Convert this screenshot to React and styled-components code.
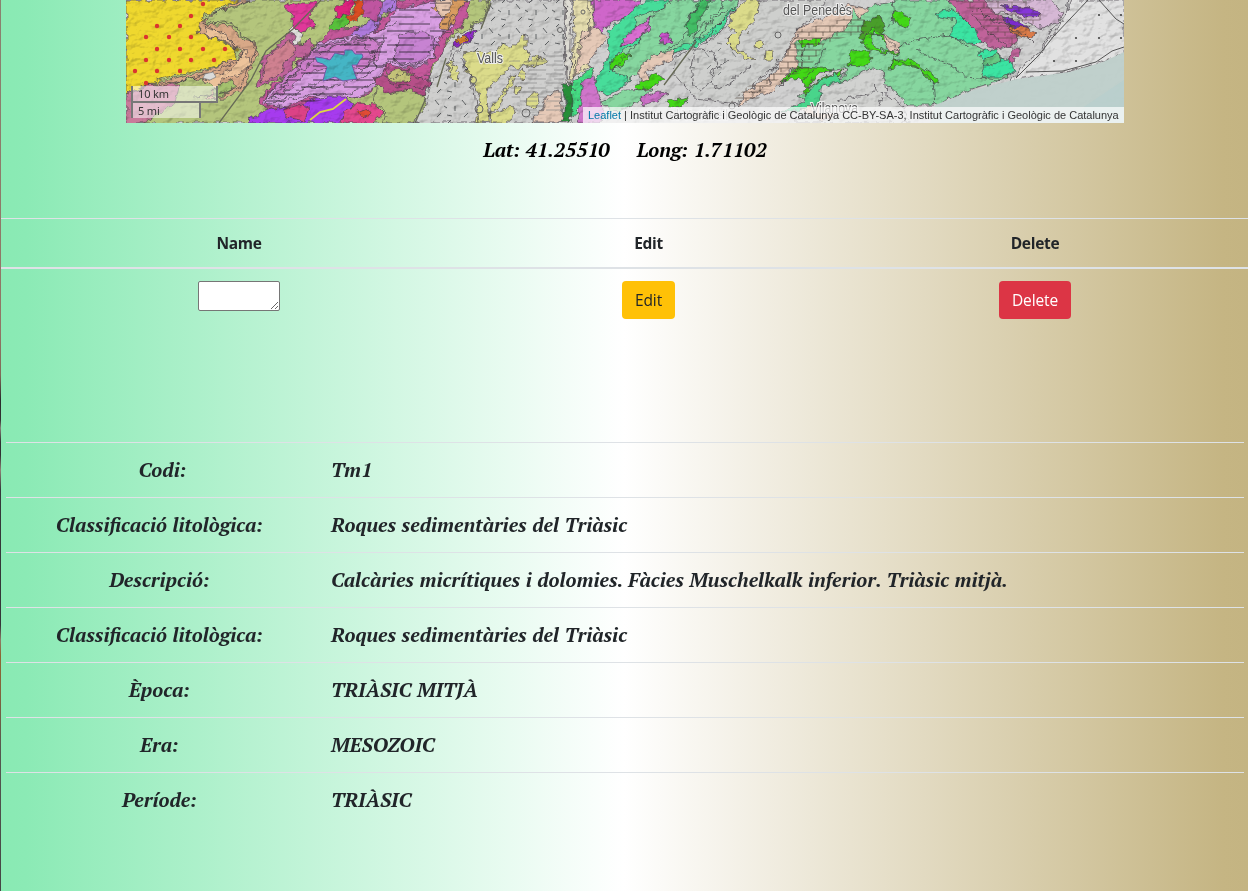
import React from 'react';
import styled, { createGlobalStyle, css } from 'styled-components';

const GlobalStyle = createGlobalStyle`
  *, *::before, *::after { box-sizing: border-box; }
  body {
    margin: 0;
    font-family: "Open Sans", "Noto Sans", sans-serif;
    font-size: 16px;
    line-height: 1.5;
    color: #212529;
  }
`;

const Page = styled.div`
  height: 891px;
  overflow: hidden;
  padding-left: 1px;
  background:
    linear-gradient(180deg, #8a8270 0, #927565 330px, #806a58 375px, #292b2c 400px, #333 420px, #858379 428px, #2f3030 442px, #303132 455px, #8e8276 470px, #35383a 490px, #343638 625px, #8d7c67 640px, #8d6734 655px, #85633c 690px, #555850 750px, #454545 891px) 0 0 / 1px 100% no-repeat,
    linear-gradient(90deg, #89eab3 0%, #8beab5 2%, #fff 50%, #c5b583 98%, #c4b482 100%);
`;

const MapFrame = styled.section`
  position: relative;
  width: 998px;
  height: 123px;
  margin-left: 125px;
  overflow: hidden;
  background: #ccc;
  font: 11px/16px "Liberation Sans", sans-serif;
`;

const MapDrawing = styled.svg`
  display: block;
`;

const ScaleControl = styled.div`
  position: absolute;
  left: 5px;
  bottom: 5px;
`;

const ScaleLine = styled.div`
  width: ${p => p.$width}px;
  height: ${p => (p.$upper ? 17 : 15)}px;
  padding: 0 5px;
  border: 2px solid #777;
  border-top: 0;
  border-bottom-width: ${p => (p.$upper ? 2 : 0)}px;
  background: rgba(255, 255, 255, 0.5);
  color: #333;
  font: 11px/15px "Noto Sans", sans-serif;
  letter-spacing: -0.15px;
`;

const Attribution = styled.div`
  position: absolute;
  right: 0;
  bottom: 0;
  width: 541px;
  height: 16px;
  padding: 0 5px;
  background: rgba(255, 255, 255, 0.7);
  color: #333;
  white-space: nowrap;
`;

const MapLink = styled.a`
  color: #0078a8;
  text-decoration: none;
`;

const serif = css`
  font-family: "PT Serif", "Liberation Serif", serif;
  font-size: 20px;
  font-weight: 700;
  font-style: italic;
  line-height: 24px;
  white-space: nowrap;
`;

const Coordinates = styled.div`
  display: flex;
  justify-content: center;
  gap: 27px;
  height: 95px;
  padding-top: 15px;
  padding-left: 1px;
  color: #000;
`;

const Coordinate = styled.span`
  ${serif}
`;

const ActionsTable = styled.div`
  height: 224px;
`;

const ActionsRow = styled.div`
  display: grid;
  grid-template-columns: 476px 343px 430px;
  justify-items: center;
  align-items: start;
  padding-top: 12px;
  ${p => p.$head && css`
    height: 51px;
    border-top: 1px solid #dee2e6;
    border-bottom: 2px solid #dee2e6;
    font-weight: 700;
    font-size: 15.5px;
    letter-spacing: -0.3px;
    line-height: 25px;
  `}
`;

const NameField = styled.textarea`
  width: 82px;
  height: 30px;
  padding: 2px;
  border: 1px solid #767676;
  border-radius: 2px;
  background: #fff;
  resize: both;
  overflow: hidden;
`;

const Button = styled.button`
  width: ${p => p.$width}px;
  height: 38px;
  padding: 0;
  border: 0;
  border-radius: 4px;
  background: ${p => (p.$danger ? '#dc3545' : '#ffc107')};
  color: ${p => (p.$danger ? '#fff' : '#212529')};
  font: 15.5px/38px "Open Sans", sans-serif;
  letter-spacing: -0.1px;
`;

const Details = styled.dl`
  margin: 0 4px 0 5px;
`;

const DetailRow = styled.div`
  display: grid;
  grid-template-columns: 313px 1fr;
  height: 55px;
  padding-top: 15px;
  border-top: 1px solid #dee2e6;
`;

const Term = styled.dt`
  ${serif}
  text-align: center;
  padding-right: ${p => (p.$first ? 0 : 6)}px;
`;

const Value = styled.dd`
  ${serif}
  margin: 0;
  padding-left: 12px;
`;

const details = [
  ['Codi:', 'Tm1'],
  ['Classificació litològica:', 'Roques sedimentàries del Triàsic'],
  ['Descripció:', 'Calcàries micrítiques i dolomies. Fàcies Muschelkalk inferior. Triàsic mitjà.'],
  ['Classificació litològica:', 'Roques sedimentàries del Triàsic'],
  ['Època:', 'TRIÀSIC MITJÀ'],
  ['Era:', 'MESOZOIC'],
  ['Període:', 'TRIÀSIC'],
];

const olive = '#b4c57c';
const purple = '#ce7fcb';
const lilac = '#d99fe3';
const plum = '#c0639a';
const green = '#86d69f';
const teal = '#3be4a2';
const lime = '#42d819';
const sand = '#e5c9b7';
const straw = '#dbdb8a';

const regions = [
  [olive, '126,0 470,0 492,0 482,22 450,38 425,82 420,123 126,123'],
  ['#c97a9a', '126,94 148,84 180,84 175,103 145,123 126,123'],
  ['#efd82f', '126,0 240,0 207,13 202,20 197,32 222,42 237,50 235,60 203,70 168,77 147,84 126,94'],
  ['#d8a887', '240,0 250,0 210,15 205,24 232,26 242,39 254,41 257,54 250,70 245,88 225,98 205,99 218,86 192,77 164,86 147,84 203,72 239,58 241,51 220,40 198,33 200,22'],
  ['#edc39b', '204,27 225,33 235,48 246,50 250,65 238,76 223,78 218,88 203,81 232,69 243,54 231,44 207,35'],
  ['#a4c16e', '219,85 233,80 235,86 221,97 212,96'],
  [plum, '287,33 294,31 301,46 308,39 314,46 305,57 296,58 288,75 257,88 263,58 275,49'],
  ['#cf8190', '275,50 292,39 296,52 286,61 280,75 261,83 266,61'],
  ['#c4589a', '334,28 370,27 388,15 400,0 470,0 468,15 458,31 447,37 443,53 431,66 425,86 405,95 398,76 382,78 367,95 339,99 322,111 305,105 288,120 248,121 269,111 258,102 270,86 290,74 298,61 320,43'],
  [lilac, '317,43 380,31 397,10 440,0 454,27 442,32 433,57 423,66 403,68 386,64 383,80 365,94 331,102 310,96 288,107 262,104 271,89 291,76 304,65'],
  [purple, '312,51 330,43 367,37 380,42 380,57 363,69 338,66 304,74 291,88 269,99 281,80'],
  ['#ad7adc', '374,0 399,0 397,10 382,14 378,29 363,37 350,36 359,27 370,20'],
  ['#c783d2', '400,34 424,31 441,45 431,51 422,61 403,63 394,60 397,45'],
  ['#e0389a', '282,6 289,3 318,3 309,16 317,26 301,32 292,26 292,15'],
  ['#dd247d', '345,0 356,0 348,15 338,18 334,10'],
  ['#dc4e24', '354,0 368,0 363,14 348,24 343,19 355,12'],
  ['#bf55a0', '363,0 382,0 378,22 363,17'],
  ['#58c13a', '335,19 346,16 350,21 340,31 329,29'],
  ['#a63bee', '245,123 263,111 281,106 296,111 310,100 326,97 347,97 352,107 339,123'],
  ['#dc4286', '282,110 302,104 310,109 304,121 287,117'],
  ['#e3468d', '343,111 358,104 375,105 384,114 373,123 342,123'],
  ['#e14b35', '357,112 367,108 371,113 363,119'],
  [olive, '377,83 394,81 401,89 420,90 426,103 420,123 382,123 386,111 374,103'],
  ['#b64f88', '374,79 407,70 430,83 423,96 409,89 387,94'],
  ['#c3c278', '386,72 398,69 413,75 406,82 390,82'],
  ['#cfcfce', '491,0 572,0 568,48 573,81 565,96 565,123 413,123 427,104 430,84 447,69 452,47 481,28'],
  ['#d99c61', '438,0 467,0 456,14 450,29 439,28 445,17 433,10'],
  ['#e7c6b0', '434,0 451,0 451,13 441,18'],
  ['#922ccb', '453,47 461,36 470,31 475,30 472,39 460,46'],
  ['#d3822d', '457,39 462,35 468,38 461,45'],
  [straw, '464,53 477,50 486,53 496,53 502,43 510,47 515,44 521,39 526,34 526,48 530,60 544,57 547,63 527,66 516,68 511,65 503,75 490,84 487,95 488,112 488,123 475,123 480,94 466,72'],
  [straw, '451,62 459,72 458,83 450,78 448,65'],
  [straw, '490,123 491,107 502,94 507,86 511,75 516,74 512,86 506,94 500,107 486,116 512,106 516,114 505,123'],
  [straw, '520,70 525,74 523,80 518,76'],
  [straw, '516,86 521,87 519,93 515,92'],
  [straw, '527,96 537,91 539,104 532,109 526,105'],
  [straw, '524,65 533,57 540,58 532,67'],
  [sand, '548,95 560,91 562,123 530,123 540,111'],
  ['#dedcd4', '565,0 572,0 570,80 575,90 566,88'],
  ['#e5ddae', '573,0 593,0 593,31 586,60 590,67 569,80 574,42'],
  ['#cf66ca', '593,0 640,0 630,17 610,23 603,32 594,28'],
  [sand, '583,30 598,27 606,39 584,66 575,76'],
  ['#46dd9a', '608,31 627,16 644,0 739,0 732,12 721,29 711,37 691,48 664,56 641,67 624,87 606,96 593,86 609,55'],
  [green, '635,18 661,8 672,0 740,0 718,25 703,37 674,49 651,62 629,80 612,70 620,51 641,42'],
  ['#d96ed1', '624,38 638,25 651,18 648,31 634,41 620,47'],
  ['#ca56cc', '659,35 669,32 672,41 662,45'],
  ['#42bd65', '684,27 701,0 710,0 692,36'],
  [lime, '609,62 622,54 630,55 624,65 609,69'],
  ['#45dc83', '573,83 591,68 594,77 587,100 575,112 569,123 565,97'],
  ['#268e39', '562,87 570,83 573,102 571,123 560,123 567,101'],
  ['#cf75ca', '583,79 594,78 598,94 603,107 600,123 577,123'],
  [green, '602,103 625,90 653,89 640,101 617,112'],
  [lime, '636,86 655,73 665,79 652,87 639,90'],
  [lime, '667,101 689,97 680,108 668,106'],
  ['#cb70c6', '640,98 658,92 668,93 657,101 642,105'],
  [sand, '637,70 654,55 674,50 673,60 645,71 650,79 642,82'],
  ['#cecfcd', '738,0 825,0 814,17 796,30 789,53 775,68 761,77 738,104 695,99 674,74 676,56 709,42 728,25'],
  [straw, '734,11 747,0 760,0 757,15 748,30 739,36 738,50 755,59 747,60 732,48 726,42 735,33 729,26'],
  [straw, '755,42 762,40 765,45 759,49 754,47'],
  [straw, '766,50 773,51 772,60 765,60'],
  [sand, '796,30 823,17 849,5 871,9 880,20 860,33 829,41 820,57 791,70 783,80 771,93 753,97 738,107 744,92 764,80 776,72 786,53'],
  [green, '797,42 820,43 848,26 854,8 861,18 872,6 900,0 964,0 979,14 972,44 1003,58 1008,78 978,87 934,105 909,105 888,86 876,80 860,84 835,98 808,102 799,96 822,84 842,78 849,68 822,72 802,72 797,64'],
  ['#489e2a', '864,22 880,15 885,30 872,44 859,38'],
  [lime, '799,40 823,38 816,45 801,46'],
  [lime, '779,83 798,67 818,68 834,69 818,73 807,88 799,76'],
  [lime, '850,52 870,50 872,61 864,67 848,65'],
  [lime, '895,9 911,17 907,28 893,22'],
  [lime, '891,60 911,60 923,68 937,77 939,82 928,80 921,69 902,64 890,70'],
  ['#44d61b', '872,27 886,38 900,53 889,54 872,50 861,44'],
  [green, '874,31 887,44 896,51 884,51 871,43'],
  ['#44d61b', '802,92 822,78 843,70 834,85 808,94'],
  [green, '808,88 825,78 842,75 832,88 810,97'],
  ['#48d58b', '781,112 803,101 817,82 835,73 842,83 828,98 810,110'],
  ['#d1d2d0', '822,86 847,81 870,67 883,71 886,94 903,106 910,123 795,123 819,104'],
  [teal, '935,14 950,8 957,13 970,17 982,28 989,38 983,43 966,42 949,36 956,20 939,17'],
  [teal, '979,52 996,48 1000,58 1012,61 1014,72 1003,77 981,77 985,67'],
  ['#68cb84', '984,58 998,54 1001,60 992,66 984,65'],
  [plum, '950,0 989,0 1004,21 1018,37 1016,45 998,49 981,43 975,30 961,16'],
  ['#d6b8d5', '984,0 1051,0 1062,13 1058,22 1042,28 1029,23 1011,14 991,12'],
  ['#8634d9', '1000,5 1028,8 1041,13 1037,17 1024,17'],
  ['#7b29cf', '1002,18 1017,20 1030,28 1023,32 1008,25'],
  ['#dc7c49', '1009,25 1024,27 1038,34 1028,38 1012,34'],
  ['#e1e1e1', '1071,0 1124,0 1124,54 1099,63 1066,73 1015,79 1007,85 1021,67 1041,51 1052,37 1064,18'],
  [plum, '1011,48 1021,48 1018,57 1010,63'],
  [sand, '883,35 899,43 901,52 888,52'],
  [sand, '801,110 818,104 828,107 835,115 821,121'],
  ['#dfdfdc', '289,28 293,26 298,31 303,34 299,46 294,43 296,38'],
];

const veins = [
  '248,1 235,7 209,14 203,23 225,22 239,27 241,36 252,40 256,51 248,65 242,86 223,93 195,97',
  '207,25 230,39 239,48 244,51 237,62 212,72 177,82 149,84 128,95',
  '320,44 297,63 295,76 268,91 265,104 284,101 311,94 335,96 359,91 378,78 393,62 410,65 427,62',
  '314,48 299,69 283,84 273,99 290,97 307,87 325,88 345,84 365,76 377,66 370,53 382,47 372,38 344,43 314,48',
  '319,54 308,66 290,77 282,91 300,90 324,80 349,78 367,67 375,55 362,43 340,44 319,54',
  '385,35 372,60 378,68 395,59 405,67 422,64 435,56 434,40 444,32 452,33 449,21 461,6',
  '398,22 377,31 376,22 388,13 397,0',
  '386,81 405,73 417,78 426,76 430,85 420,89 409,84 397,87 386,81',
  '462,58 469,76 474,90 478,123', '489,0 484,16 471,27 470,41 455,53 448,80',
  '588,0 589,35 575,45 574,80', '566,0 563,42 568,82 575,91',
  '610,72 640,41 654,12 673,2', '655,56 684,40 690,16 704,0', '693,47 696,32 719,11 724,0',
  '699,42 708,23 727,10', '704,44 718,25 734,9', '799,33 785,54 773,68 768,85 750,94',
  '805,47 801,67 792,74 779,87', '825,48 816,66 803,82', '894,60 920,68 933,82 935,105',
  '886,54 915,40 950,35 969,47', '860,33 882,35 899,51 890,66', '889,28 894,16 892,0',
  '915,49 928,57 945,62 967,77 1000,80', '971,12 982,27 996,38 1007,46', '977,7 990,20 1015,27',
  '988,20 998,19 1021,36', '1007,16 1009,28 1024,34 1035,45', '1068,0 1065,15 1052,30 1042,48',
  '695,49 691,67 694,86 701,90 711,82 716,66 713,51 701,49 695,49',
  '729,61 710,72 712,84 720,89 739,76 751,65', '873,85 883,94 878,106', '836,101 868,95 878,88',
];

const redDots = [[157,26],[180,26],[191,16],[146,37],[169,37],[191,37],[157,49],[180,49],[203,49],[225,49],[146,60],[169,60],[191,60],[214,60],[135,71],[157,71],[180,71],[146,83],[203,4]];
const blackDots = [[1099,15],[1121,15],[1076,38],[1099,38],[1121,38],[1054,61],[1076,61]];
const circles = [[473,80,3.5],[505,90,2],[526,113,4],[479,109,4],[583,12,2],[778,35,3],[560,30,2.5],[732,106,3]];

function GeologicalMap() {
  return (
    <MapDrawing width="998" height="123" viewBox="126 0 998 123" aria-hidden="true">
      <defs>
        <filter id="outline" x="-2%" y="-5%" width="104%" height="110%">
          <feTurbulence type="fractalNoise" baseFrequency=".15" numOctaves="2" seed="8" />
          <feDisplacementMap in="SourceGraphic" scale="8" xChannelSelector="R" yChannelSelector="G" />
        </filter>
        <filter id="relief" x="0" y="0" width="100%" height="100%" colorInterpolationFilters="sRGB">
          <feTurbulence type="fractalNoise" baseFrequency=".09 .13" numOctaves="4" seed="12" />
          <feColorMatrix type="matrix" values="0 0 0 0 0 0 0 0 0 0 0 0 0 0 0 1 0 0 0 0" />
          <feDiffuseLighting surfaceScale="3" diffuseConstant="1.35" lightingColor="#fff">
            <feDistantLight azimuth="225" elevation="48" />
          </feDiffuseLighting>
        </filter>
        <pattern id="strata" width="43" height="14" patternUnits="userSpaceOnUse">
          <path d="M0 3h27M12 10h31" stroke="#252029" strokeWidth=".8" />
        </pattern>
        <pattern id="bricks" width="14" height="12" patternUnits="userSpaceOnUse">
          <path d="M0 2h14M0 8h14M4 2v6M11 8v6" stroke="#51433a" strokeWidth=".65" fill="none" />
        </pattern>
        <pattern id="dashes" width="27" height="24" patternUnits="userSpaceOnUse">
          <path d="M3 4l4 5M16 3l4-4M23 10v5M9 17l-4 4M15 19l5 1M12 10l3 2" stroke="#44484a" strokeWidth=".8" />
        </pattern>
        <pattern id="fields" width="26" height="9" patternUnits="userSpaceOnUse">
          <path d="M0 2h17M8 7h18" stroke="#818181" strokeWidth=".65" />
        </pattern>
      </defs>
      <rect x="126" width="998" height="123" fill="#d0d0d0" />
      <g filter="url(#outline)" stroke="#454047" strokeWidth=".65" strokeLinejoin="round">
        {regions.map(([fill, points], i) => <polygon key={i} points={points} fill={fill} />)}
        {veins.map((points, i) => <polyline key={i} points={points} fill="none" strokeWidth=".7" />)}
      </g>
      <path d="M315 42L380 31 400 4 451 2 445 34 430 61 380 70 366 91 290 107 264 103 291 75z" fill="url(#strata)" />
      <path d="M315 57l8 1 7 2 5-7 9 2 1-5 7 0 3 4 7 0 1 3-3 3-3 5-5 0 3 9 2 5-8 1-6 1-8-4-12 4 2-8 2-6-4-3-6-2z" fill="#45b5c5" stroke="#7358a6" />
      <path d="M492 0h74v43l-26 15-14-20-27 13-35 1 19-28zM440 78l14-2 20 47h-50z" fill="url(#dashes)" />
      <path d="M509 61l53-12 5 62-33 5-22-14z" fill="url(#fields)" />
      <path d="M798 30l65-16 5 17-43 12-17 28-29 8-25 24h-24l18-17 28-14z" fill="url(#bricks)" />
      <path d="M684 63l13-15 33-11 10 24-25 18-23-9z" fill="url(#dashes)" opacity=".7" />
      <path d="M960 0l65 1 20 16-21 15-8 15-27-13z" fill="url(#bricks)" opacity=".8" />
      <rect x="126" width="998" height="123" filter="url(#relief)" opacity=".23" style={{ mixBlendMode: 'multiply' }} />
      <path d="M930 123l5-18 39-15 43-11 53-7 33-10 21-10v71z" fill="#bfcfcb" opacity=".97" />
      <path d="M1085 106l39-26v43h-55z" fill="#b0cfcf" opacity=".35" />
      <path d="M1016 78l23-23 14-18 35-37M1099 0l17 19 8 5M1026 72l37-1 33-9 16-11 12-4" fill="none" stroke="#555" strokeWidth="1" />
      <path d="M321 0l-28 29-27 22-15 29-32 43M491 3l-10 26M446 58l-9 29M426 98l-11 25M696 42l-32 43" fill="none" stroke="#666956" strokeWidth="1.3" />
      <path d="M310 120l10-8 13-3 13-10" fill="none" stroke="#ddd842" strokeWidth="1.8" />
      <path d="M205 74l8-2 3 5-6 3-7-2z" fill="#dadbda" stroke="#777" strokeWidth=".6" />
      {redDots.map(([x, y]) => <circle key={`${x}-${y}`} cx={x} cy={y} r="2.2" fill="#db352f" />)}
      {blackDots.map(([x, y]) => <circle key={`${x}-${y}`} cx={x} cy={y} r="1.1" fill="#444" />)}
      {circles.map(([x, y, r]) => <circle key={`${x}-${y}`} cx={x} cy={y} r={r} fill="none" stroke="#666" />)}
      <g fill="#555" stroke="#eee" strokeWidth="2" paintOrder="stroke" fontFamily="Liberation Sans, sans-serif" fontSize="14">
        <text x="477" y="63" textLength="26" lengthAdjust="spacingAndGlyphs">Valls</text>
        <text x="783" y="15" textLength="69" lengthAdjust="spacingAndGlyphs">del Penedès</text>
        <text x="811" y="113" textLength="47" lengthAdjust="spacingAndGlyphs">Vilanova</text>
        <text x="669" y="120" textLength="59" lengthAdjust="spacingAndGlyphs" opacity=".45">el Vendrell</text>
      </g>
    </MapDrawing>
  );
}

export default function App() {
  return (
    <>
      <GlobalStyle />
      <Page>
        <MapFrame>
          <GeologicalMap />
          <ScaleControl>
            <ScaleLine $width={87} $upper>10 km</ScaleLine>
            <ScaleLine $width={70}>5 mi</ScaleLine>
          </ScaleControl>
          <Attribution><MapLink>Leaflet</MapLink> | Institut Cartogràfic i Geològic de Catalunya CC-BY-SA-3, Institut Cartogràfic i Geològic de Catalunya</Attribution>
        </MapFrame>
        <Coordinates>
          <Coordinate>Lat: 41.25510</Coordinate>
          <Coordinate>Long: 1.71102</Coordinate>
        </Coordinates>
        <ActionsTable>
          <ActionsRow $head><span>Name</span><span>Edit</span><span>Delete</span></ActionsRow>
          <ActionsRow>
            <NameField aria-label="Name" />
            <Button $width={53}>Edit</Button>
            <Button $width={72} $danger>Delete</Button>
          </ActionsRow>
        </ActionsTable>
        <Details>
          {details.map(([term, value], i) => (
            <DetailRow key={i}>
              <Term $first={i === 0}>{term}</Term>
              <Value>{value}</Value>
            </DetailRow>
          ))}
        </Details>
      </Page>
    </>
  );
}
